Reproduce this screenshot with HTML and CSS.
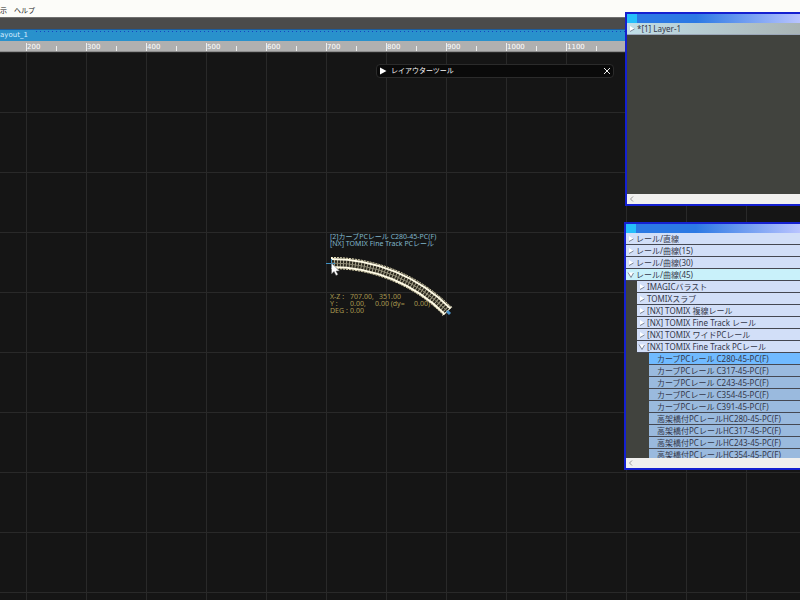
FILE: index.html
```
<!DOCTYPE html>
<html lang="ja">
<head>
<meta charset="utf-8">
<title>Layout_1</title>
<link rel="stylesheet" href="styles.css">
</head>
<body>
<div class="app">
  <nav class="menubar">
    <button class="menu">示</button>
    <button class="menu">ヘルプ</button>
  </nav>
  <div class="toolbar"></div>
  <header class="doc-title">ayout_1</header>
  <div class="ruler">
    <span>200</span><span>300</span><span>400</span><span>500</span><span>600</span><span>700</span><span>800</span><span>900</span><span>1000</span><span>1100</span>
  </div>
  <main class="canvas">
    <section class="tool">
      <button class="tool-open" aria-label="開く"><svg viewBox="0 0 8 8"><path d="M1 0.5L7.5 4L1 7.5Z" fill="#fff"/></svg></button>
      <h2>レイアウターツール</h2>
      <button class="tool-close" aria-label="閉じる"><svg viewBox="0 0 8 8"><path d="M1 1L7 7M7 1L1 7" stroke="#eee" fill="none"/></svg></button>
    </section>
    <p class="note rail-name">[2]カーブPCレール C280-45-PC(F)<br>[NX] TOMIX Fine Track PCレール</p>
    <dl class="note coords">
      <dt>X-Z :</dt><dd>707.00,</dd><dd>351.00</dd>
      <dt>Y :</dt><dd>0.00,</dd><dd>0.00 (dy=</dd><dd>0.00)</dd>
      <dt>DEG :</dt><dd>0.00</dd>
    </dl>
    <svg class="track" viewBox="0 0 140 70" fill="none">
      <path d="M7 12A165 165 0 0 1 123.700 60.300" stroke="#29261c" stroke-width="12"/>
      <path d="M7 12A165 165 0 0 1 123.700 60.300" stroke="#aaa68d" stroke-width="8" stroke-dasharray="1 2"/>
      <path d="M7 12A165 165 0 0 1 123.700 60.300" stroke="#8e8a76" stroke-width="1"/>
      <path d="M7 8A169 169 0 0 1 126.500 57.500" stroke="#fffbe6" stroke-width="2"/>
      <path d="M7 16A161 161 0 0 1 120.800 63.200" stroke="#fffbe6" stroke-width="2"/>
      <path d="M7 6.500A170.500 170.500 0 0 1 127.600 56.400M7 17.500A159.500 159.500 0 0 1 119.800 64.200" stroke="#e8e2bf" stroke-dasharray="2 1"/>
      <path d="M7.500 6V18M118.500 64.500L128 55.500" stroke="#fffbe6"/>
      <path d="M2 12.500H11M7.500 8V17" stroke="#3f91c4"/>
      <path d="M123 60L126 63" stroke="#4b91c5" stroke-width="3"/>
      <path d="M7.500 12V23L10 20.500L12 24.500L14 23.500L12 20H15.500Z" fill="#fff" stroke="#555" stroke-width=".5"/>
    </svg>
  </main>
</div>

<aside class="window layers">
  <div class="bar"></div>
  <ul class="tree">
    <li class="layer"><svg viewBox="0 0 8 8"><path class="arrow" d="M2 1L6.500 4L2 6.500Z"/><path class="shade" d="M2 6.500L6.500 4"/></svg>*[1] Layer-1</li>
  </ul>
  <div class="scroll"><button aria-label="左"><svg viewBox="0 0 8 8"><path d="M5 1.500L2.500 4L5 6.500"/></svg></button></div>
</aside>

<aside class="window rails">
  <div class="bar"></div>
  <ul class="tree">
    <li><svg viewBox="0 0 8 8"><path class="arrow" d="M2 1L6.500 4L2 6.500Z"/><path class="shade" d="M2 6.500L6.500 4"/></svg>レール/直線</li>
    <li><svg viewBox="0 0 8 8"><path class="arrow" d="M2 1L6.500 4L2 6.500Z"/><path class="shade" d="M2 6.500L6.500 4"/></svg>レール/曲線(15)</li>
    <li><svg viewBox="0 0 8 8"><path class="arrow" d="M2 1L6.500 4L2 6.500Z"/><path class="shade" d="M2 6.500L6.500 4"/></svg>レール/曲線(30)</li>
    <li class="open"><svg viewBox="0 0 8 8"><path class="arrow" d="M1 1.500L4 6.500L7 1.500Z"/><path class="shade" d="M1 1.500L4 6.500L6.500 2"/></svg>レール/曲線(45)</li>
    <li class="sub"><svg viewBox="0 0 8 8"><path class="arrow" d="M2 1L6.500 4L2 6.500Z"/><path class="shade" d="M2 6.500L6.500 4"/></svg>IMAGICバラスト</li>
    <li class="sub"><svg viewBox="0 0 8 8"><path class="arrow" d="M2 1L6.500 4L2 6.500Z"/><path class="shade" d="M2 6.500L6.500 4"/></svg>TOMIXスラブ</li>
    <li class="sub"><svg viewBox="0 0 8 8"><path class="arrow" d="M2 1L6.500 4L2 6.500Z"/><path class="shade" d="M2 6.500L6.500 4"/></svg>[NX] TOMIX 複線レール</li>
    <li class="sub"><svg viewBox="0 0 8 8"><path class="arrow" d="M2 1L6.500 4L2 6.500Z"/><path class="shade" d="M2 6.500L6.500 4"/></svg>[NX] TOMIX Fine Track レール</li>
    <li class="sub"><svg viewBox="0 0 8 8"><path class="arrow" d="M2 1L6.500 4L2 6.500Z"/><path class="shade" d="M2 6.500L6.500 4"/></svg>[NX] TOMIX ワイドPCレール</li>
    <li class="sub"><svg viewBox="0 0 8 8"><path class="arrow" d="M1 1.500L4 6.500L7 1.500Z"/><path class="shade" d="M1 1.500L4 6.500L6.500 2"/></svg>[NX] TOMIX Fine Track PCレール</li>
    <li class="item selected">カーブPCレール C280-45-PC(F)</li>
    <li class="item">カーブPCレール C317-45-PC(F)</li>
    <li class="item">カーブPCレール C243-45-PC(F)</li>
    <li class="item">カーブPCレール C354-45-PC(F)</li>
    <li class="item">カーブPCレール C391-45-PC(F)</li>
    <li class="item">高架橋付PCレールHC280-45-PC(F)</li>
    <li class="item">高架橋付PCレールHC317-45-PC(F)</li>
    <li class="item">高架橋付PCレールHC243-45-PC(F)</li>
    <li class="item">高架橋付PCレールHC354-45-PC(F)</li>
  </ul>
  <div class="scroll"><button aria-label="左"><svg viewBox="0 0 8 8"><path d="M5 1.500L2.500 4L5 6.500"/></svg></button></div>
</aside>
</body>
</html>
```
FILE: styles.css
```
* { box-sizing: border-box; }
body, ul, dl, dd, p, h2 { margin: 0; padding: 0; }
body {
  font: 7px/11px "DejaVu Sans", "Noto Sans CJK JP", sans-serif;
  overflow: hidden;
  background: #151515;
}
button { border: 0; padding: 0; background: none; font: inherit; color: inherit; }
svg { display: block; width: 8px; height: 8px; flex: none; }
.app { display: flex; flex-direction: column; height: 100vh; }
.menubar { display: flex; gap: 7px; height: 17px; padding-top: 6px; background: #fcfcf9; color: #222; text-indent: -3px; }
.menu { height: 11px; }
.toolbar { height: 12px; background: #4b4b4b; border-top: 1px solid #707070; }
.doc-title {
  height: 12px; color: #d5edff;
  background: repeating-linear-gradient(90deg, #1644c4 0 1px, transparent 1px 4px) 36px 1px / 100% 1px no-repeat, #2991cc;
  border-top: 1px solid #1c5c9d;
}
.ruler { display: flex; height: 11px; padding-left: 26px; overflow: hidden; background: #b0b0b0; border-bottom: 1px solid #8c8c8c; }
.ruler span {
  flex: 0 0 60px; padding: 1px 0 0 1px; line-height: 10px; color: #fff;
  background:
    linear-gradient(#eee, #eee) 0 2px / 1px 9px no-repeat,
    linear-gradient(#eee, #eee) 30px 5px / 1px 6px no-repeat;
}
.canvas {
  position: relative; flex: 1; overflow: hidden;
  background:
    linear-gradient(90deg, #292929 1px, transparent 1px) 26px 0 / 60px 60px,
    linear-gradient(#292929 1px, transparent 1px) 0 0 / 60px 60px,
    #151515;
}
.tool {
  position: absolute; left: 376px; top: 12px; width: 238px; height: 14px;
  display: flex; align-items: center; gap: 4px; padding: 0 2px;
  border: 1px solid #2b2b2b; border-radius: 4px; background: #0a0a0a; color: #f8f8f8;
}
.tool h2 { flex: 1; font-size: 7px; font-weight: 400; }
.note { position: absolute; left: 330px; font-family: "Noto Sans", "Noto Sans CJK JP", sans-serif; line-height: 7px; white-space: nowrap; }
.rail-name { top: 181px; color: #80b6ca; }
.track { position: absolute; left: 324px; top: 199px; width: 140px; height: 70px; }
.coords {
  top: 241px; color: #a89850;
  display: grid; grid-template-columns: 20px 25px 39px auto;
}
.coords dt { grid-column: 1; }
.coords dd:nth-of-type(2) { padding-left: 4px; }
.window { position: absolute; right: 0; display: flex; flex-direction: column; border: 2px solid #1420d0; border-right: 0; background: #41433e; color: #34384a; }
.layers { left: 625px; top: 12px; height: 194px; }
.rails { left: 624px; top: 222px; height: 248px; }
.bar { flex: none; height: 9px; background: linear-gradient(90deg, #25bffa 10px, #2c79e4 10px 40%, #b9c4ff); }
.tree { flex: 1; overflow: hidden; list-style: none; font: 8px/12px "Noto Sans", "Noto Sans CJK JP", sans-serif; }
.tree li {
  display: flex; align-items: center; gap: 1px; height: 12px; padding-left: 1px;
  white-space: nowrap; background: #d2dff8; border-bottom: 1px solid #454852;
}
.tree .layer { background: linear-gradient(90deg, #c1dfe8, #a9b4b5); border-bottom-color: #9aa6b8; }
.tree .open { background: #c9f1fa; }
.tree .sub { margin-left: 11px; }
.tree .item { margin-left: 23px; padding-left: 8px; background: #9abade; }
.tree .selected { background: #70baff; }
.arrow { fill: #fff; }
.shade { fill: none; stroke: #7d8798; stroke-width: 1; }
.scroll { flex: none; height: 10px; padding: 1px; background: #f0f0ee; }
.scroll button { display: block; }
.scroll path { fill: none; stroke: #999; }
```
